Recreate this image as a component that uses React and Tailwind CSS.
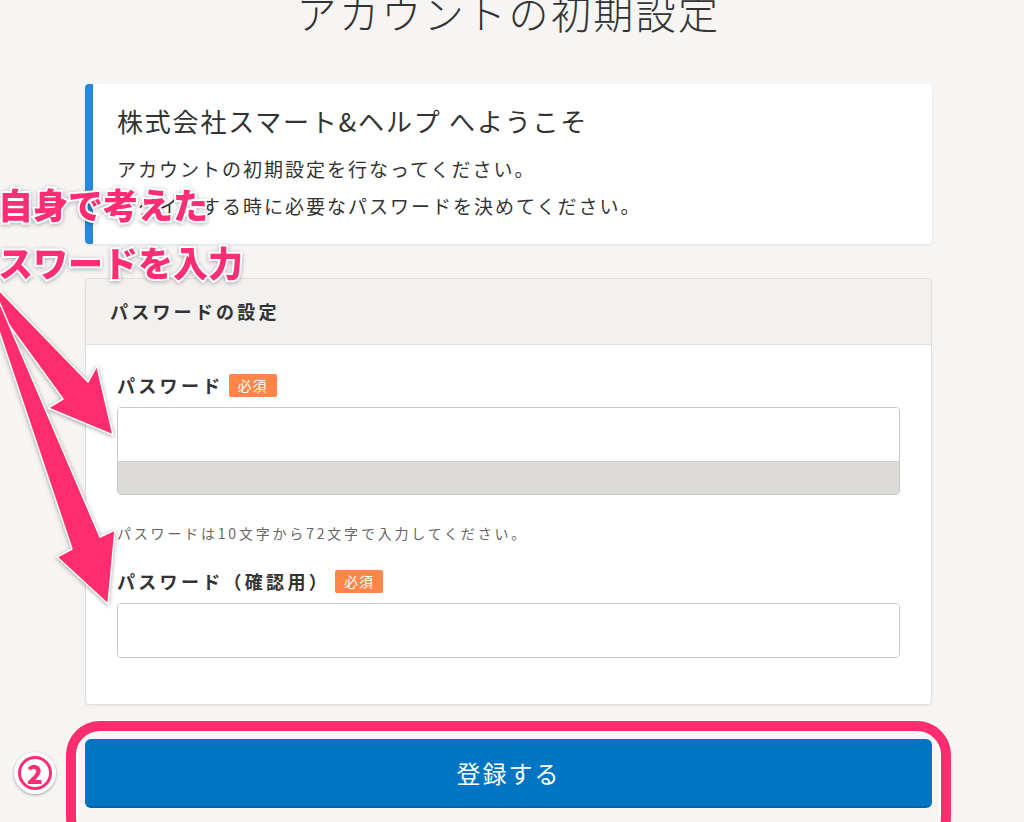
const jp = '"Noto Sans CJK JP", "Noto Sans", sans-serif';

function Required() {
  return (
    <span className="inline-flex items-center h-[23px] px-[9px] rounded-[2px] bg-[#ff8549] text-white text-[14px] tracking-[1px] font-normal">
      必須
    </span>
  );
}

function Field({ label, hint, meter }) {
  return (
    <div>
      <div className="flex items-center gap-[5px] h-[24px]">
        <span className="text-[18px] font-bold tracking-[3.3px] text-[#333]">{label}</span>
        <Required />
      </div>
      <div className="mt-[10px] rounded-[4px] border border-[#c9c8c5] overflow-hidden">
        <input type="password" className="block w-full h-[53px] bg-white outline-none px-3" />
        {meter && <div className="h-[33px] bg-[#dcdbd7] border-t border-[#cfcecb]" />}
      </div>
      {hint && <p className="mt-[28px] text-[14px] tracking-[2.8px] text-[#666] leading-[20px]">{hint}</p>}
    </div>
  );
}

function Arrows() {
  return (
    <svg
      className="absolute left-0 top-0 pointer-events-none drop-shadow-[0_1px_2px_rgba(0,0,0,0.35)]"
      width="140"
      height="640"
      viewBox="0 0 140 640"
    >
      <polygon
        points="-4,287 88,382 97,366 113,435 48,408 63,399 -4,307"
        fill="#ff2d6f"
        stroke="#fff"
        strokeWidth="1.5"
        strokeLinejoin="round"
      />
      <polygon
        points="-2,299 100,537 115,530 108,604 57,557 72,549 -7,313"
        fill="#ff2d6f"
        stroke="#fff"
        strokeWidth="1.5"
        strokeLinejoin="round"
      />
    </svg>
  );
}

export default function App() {
  const note =
    'absolute left-[-2px] text-[35px] font-black leading-none text-[#ff2d72] [-webkit-text-stroke:4px_#fff] [paint-order:stroke_fill] drop-shadow-[0_1px_2px_rgba(0,0,0,0.3)] whitespace-nowrap';

  return (
    <div className="relative w-[1024px] h-[822px] overflow-hidden bg-[#f6f5f3]" style={{ fontFamily: jp }}>
      <div className="ml-[85px] w-[847px]">
        <h1 className="mt-[-8px] text-center text-[40px] leading-none font-light tracking-[2.4px] text-[#333]">
          アカウントの初期設定
        </h1>

        {/* welcome */}
        <div className="mt-[52px] h-[160px] bg-white rounded-[4px] border-l-[8px] border-[#2b88d8] shadow-[0_1px_3px_rgba(0,0,0,0.08)] pl-[24px] pt-[19px] text-[#333]">
          <h2 className="text-[26px] leading-[36px] tracking-[1.8px]">株式会社スマート&amp;ヘルプ へようこそ</h2>
          <p className="mt-[11px] text-[19px] leading-[37px] tracking-[2px]">
            アカウントの初期設定を行なってください。
            <br />
            ログインする時に必要なパスワードを決めてください。
          </p>
        </div>

        {/* password card */}
        <div className="mt-[34px] bg-white rounded-[4px] border border-[#e0dfdc] shadow-[0_1px_3px_rgba(0,0,0,0.06)] overflow-hidden">
          <div className="h-[66px] flex items-center px-[24px] bg-[#f2f1ef] border-b border-[#e0dfdc]">
            <span className="text-[18px] font-bold tracking-[3.2px] text-[#333]">パスワードの設定</span>
          </div>
          <div className="px-[31px] pt-[28px] pb-[46px]">
            <Field label="パスワード" meter hint="パスワードは10文字から72文字で入力してください。" />
            <div className="mt-[26px]">
              <Field label="パスワード（確認用）" />
            </div>
          </div>
        </div>

        <button className="mt-[34px] w-full h-[69px] rounded-[6px] bg-[#0075c4] border-b-2 border-[#0064a8] text-white text-[24px] tracking-[2px]">
          登録する
        </button>
      </div>

      {/* annotations */}
      <div className="absolute left-[66px] top-[721px] w-[885px] h-[130px] rounded-[34px] border-[10px] border-[#ff2d6f] shadow-[inset_0_0_0_2px_#fff,0_0_0_1px_#fff] pointer-events-none" />
      <div className="absolute left-[14px] top-[752px] w-[42px] h-[42px] rounded-full bg-white shadow-[0_1px_3px_rgba(0,0,0,0.35)] flex items-center justify-center">
        <div className="w-[34px] h-[34px] rounded-full border-[3px] border-[#ff2d6f] flex items-center justify-center">
          <span className="text-[26px] leading-none font-black text-[#ff2d6f]">2</span>
        </div>
      </div>
      <Arrows />
      <div className={note + ' top-[186px]'}>自身で考えた</div>
      <div className={note + ' top-[244px]'}>スワードを入力</div>
    </div>
  );
}
